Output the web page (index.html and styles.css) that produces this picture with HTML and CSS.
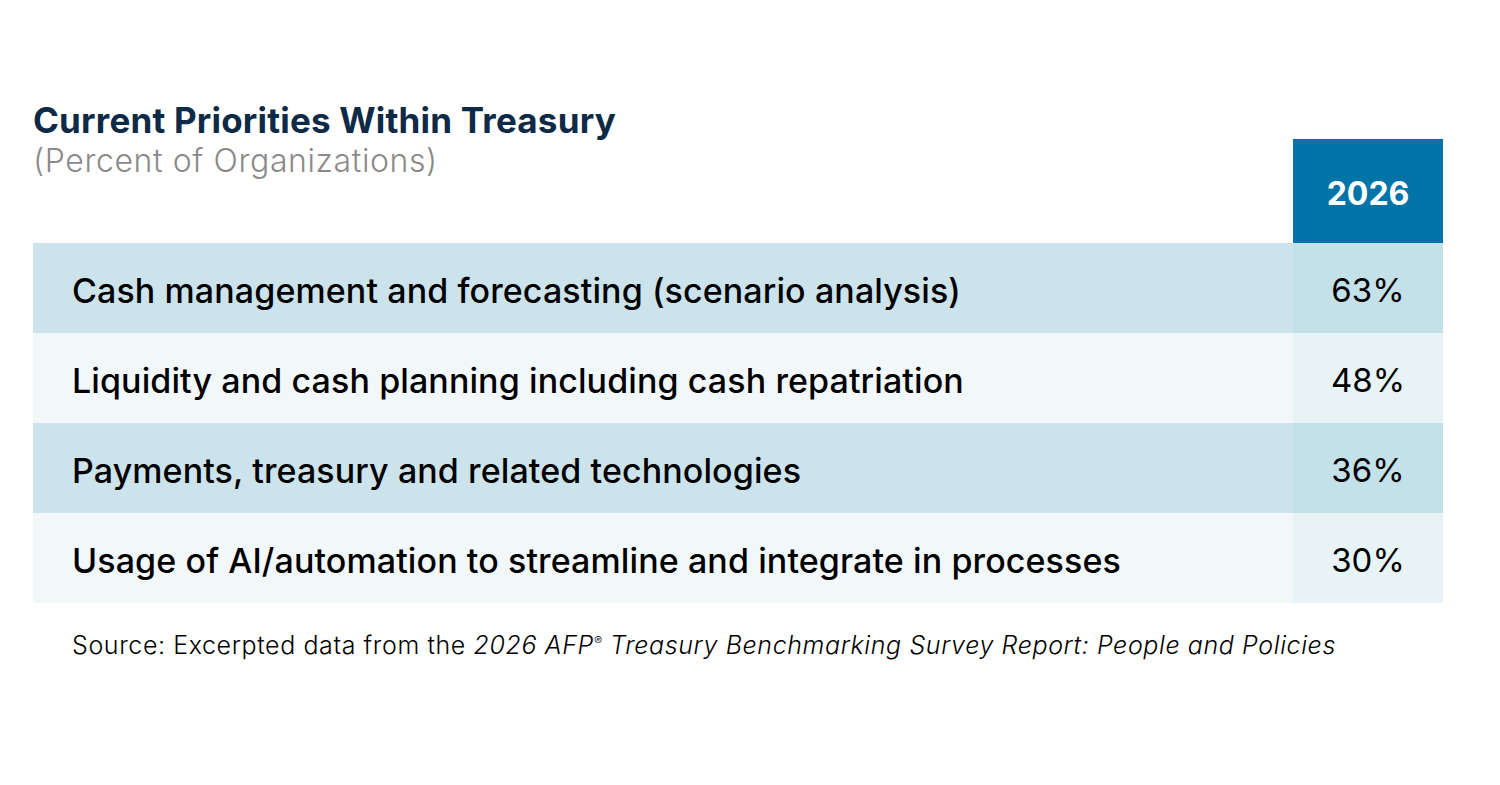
FILE: index.html
```html
<!DOCTYPE html>
<html lang="en">
<head>
<meta charset="utf-8">
<title>Current Priorities Within Treasury</title>
<link rel="stylesheet" href="styles.css">
</head>
<body>
<div class="chart">
  <div class="head">
    <div class="titles">
      <h1 class="title">Current Priorities Within Treasury</h1>
      <div class="subtitle">(Percent of Organizations)</div>
    </div>
    <div class="year">2026</div>
  </div>
  <div class="table">
    <div class="row dark"><div class="label">Cash management and forecasting (scenario analysis)</div><div class="val">63%</div></div>
    <div class="row light"><div class="label">Liquidity and cash planning including cash repatriation</div><div class="val">48%</div></div>
    <div class="row dark"><div class="label">Payments, treasury and related technologies</div><div class="val">36%</div></div>
    <div class="row light"><div class="label">Usage of AI/automation to streamline and integrate in processes</div><div class="val">30%</div></div>
  </div>
  <p class="source">Source: Excerpted data from the <em>2026 AFP<sup>®</sup> Treasury Benchmarking Survey Report: People and Policies</em></p>
</div>
</body>
</html>
```
FILE: styles.css
```css
html, body {
  margin: 0;
  padding: 0;
  background: #ffffff;
}
.chart {
  width: 1410px;
  margin-left: 33px;
  padding-top: 96px;
  font-family: "Inter", "Liberation Sans", sans-serif;
}
.head {
  display: flex;
  justify-content: space-between;
  height: 147px;
}
.title {
  margin: 0;
  font-size: 35px;
  line-height: 48px;
  font-weight: 700;
  color: #0d2a47;
  letter-spacing: 0.2px;
}
.subtitle {
  font-size: 32px;
  line-height: 34px;
  font-weight: 300;
  color: #8a8a8a;
  letter-spacing: 0.6px;
}
.year {
  align-self: flex-end;
  width: 150px;
  height: 104px;
  background: #0073a7;
  color: #ffffff;
  font-size: 32px;
  font-weight: 700;
  display: flex;
  align-items: center;
  justify-content: center;
  padding-top: 4px;
  box-sizing: border-box;
}
.row {
  display: grid;
  grid-template-columns: 1fr 150px;
  height: 90px;
}
.row.dark { background: #cce3ec; }
.row.dark .val { background: #c4e0e8; }
.row.light { background: #f2f7f9; }
.row.light .val { background: #e8f3f5; }
.label {
  padding: 4px 0 0 39px;
  display: flex;
  align-items: center;
  font-size: 34px;
  font-weight: 500;
  color: #000000;
  letter-spacing: 0.1px;
}
.val {
  display: flex;
  align-items: center;
  justify-content: center;
  padding-top: 4px;
  font-size: 33px;
  font-weight: 400;
  color: #000000;
}
.source {
  margin: 27px 0 0 39px;
  font-size: 25px;
  font-weight: 300;
  color: #000000;
  letter-spacing: 0.6px;
}
.source sup {
  font-size: 12px;
  vertical-align: 9px;
  line-height: 0;
}
```
